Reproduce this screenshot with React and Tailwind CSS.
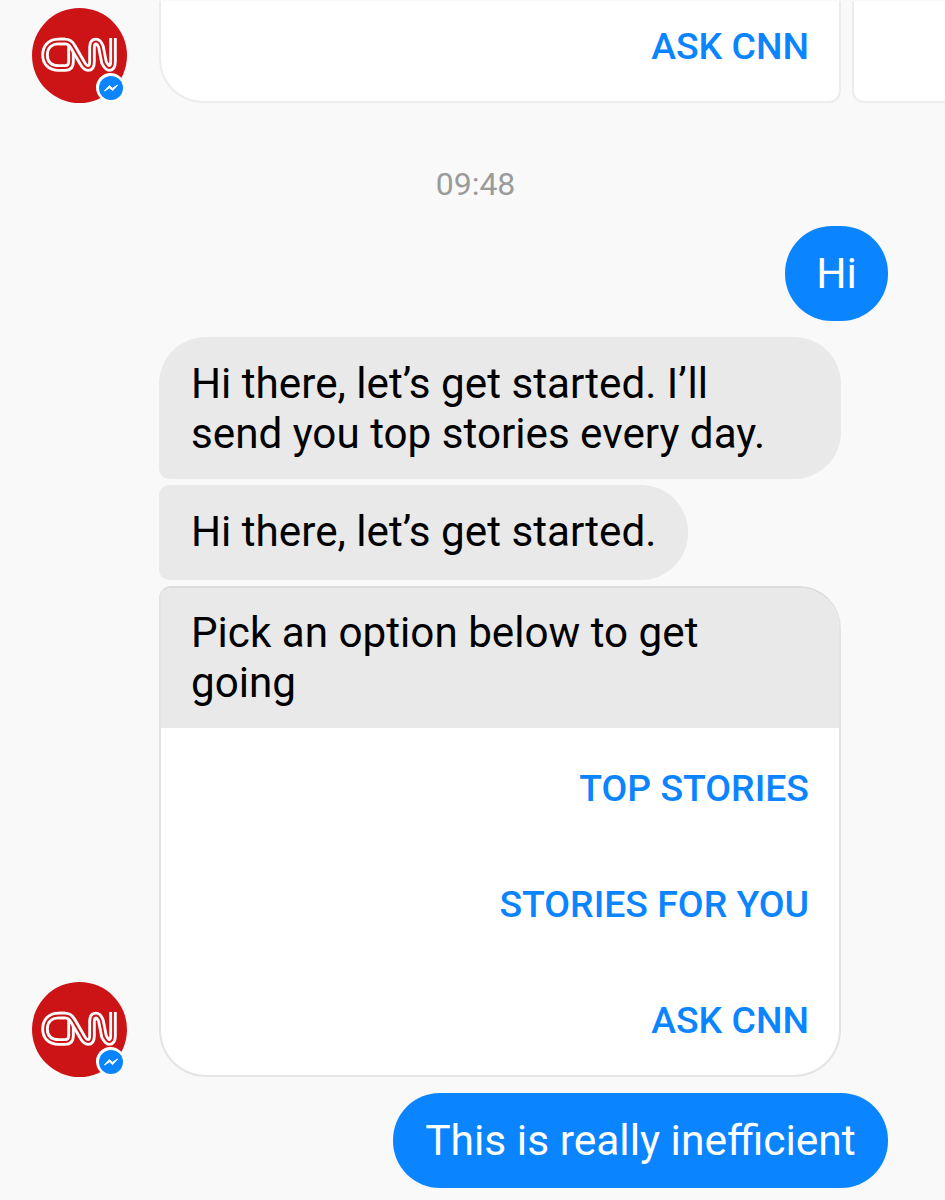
import React from 'react';

const LOGO_STEM = 'M39 37 V54 Q39 60 33 60 H27 C17 60 13 54 13 47 C13 40 17 33.5 27 33.5 H33';
const LOGO_WAVE = 'M27 33.5 H33 Q38 33.5 41 39 L50 54.5 Q53 60 56 60 Q60 60 60 54 V39.5 Q60 33.5 64 33.5 Q67 33.5 69 39 L72 54.5 Q75 60 77 60 Q81 60 81 54 V30';

const CnnAvatar = () => (
  <div className="relative w-[95px] h-[95px] shrink-0">
    <svg viewBox="0 0 95 95" className="w-full h-full">
      <circle cx="47.5" cy="47.5" r="47.5" fill="#cc1417" />
      <g fill="none" strokeLinejoin="round">
        <path d={LOGO_STEM} stroke="#fff" strokeWidth="7.5" />
        <path d={LOGO_STEM} stroke="#cc1417" strokeWidth="1.8" />
        <path d={LOGO_WAVE} stroke="#fff" strokeWidth="7.5" />
        <path d={LOGO_WAVE} stroke="#cc1417" strokeWidth="1.8" />
      </g>
    </svg>
    <div className="absolute left-[64px] top-[65px] w-[29px] h-[29px] rounded-full bg-white flex items-center justify-center">
      <svg viewBox="0 0 24 24" className="w-[24px] h-[24px]">
        <circle cx="12" cy="12" r="12" fill="#0a84ff" />
        <path d="M5.5 15 L10.3 9.6 L13.5 12.3 L18.5 9 L13.7 14.6 L10.5 11.9 Z" fill="#fff" stroke="#fff" strokeWidth="1" strokeLinejoin="round" />
      </svg>
    </div>
  </div>
);

const OptionButton = ({ children }) => (
  <div className="h-[116px] flex items-center justify-end pt-[5px] pr-[30px] text-[37.4px] font-medium text-[#0a84ff]">
    {children}
  </div>
);

const GrayBubble = ({ children, className }) => (
  <div className={`bg-[#e9e9e9] text-black text-[42.2px] leading-[50px] px-[32px] py-[22px] ${className}`}>
    {children}
  </div>
);

const BlueBubble = ({ children, className }) => (
  <div className="flex justify-end pr-[57px]">
    <div className={`h-[95px] flex items-center justify-center rounded-[47px] bg-[#0a84ff] text-white text-[42.5px] ${className}`}>
      {children}
    </div>
  </div>
);

export default function App() {
  return (
    <div
      className="w-[945px] h-[1200px] overflow-hidden bg-[#f9f9f9] flex flex-col"
      style={{ fontFamily: 'Roboto, "Noto Sans", sans-serif' }}
    >
      {/* previous message, cut off by the top of the screen */}
      <div className="flex items-end h-[103px] pl-[32px] gap-[32px]">
        <CnnAvatar />
        <div className="w-[682px] h-[102px] shrink-0 bg-white border-2 border-t-0 border-[#ececec] rounded-bl-[44px] rounded-br-[12px] flex items-center justify-end pb-[9px] pr-[30px] text-[37.4px] font-medium text-[#0a84ff]">
          ASK CNN
        </div>
        <div className="w-[300px] h-[102px] -ml-[21px] shrink-0 bg-white border-2 border-t-0 border-[#ececec] rounded-bl-[12px]" />
      </div>

      <div className="mt-[63px] h-[36px] flex items-center justify-center pl-[6px] text-[32px] text-[#9b9b9b]">09:48</div>

      <div className="mt-[24px]">
        <BlueBubble className="w-[103px]">Hi</BlueBubble>
      </div>

      <div className="mt-[16px] flex items-end pl-[32px] gap-[32px]">
        <CnnAvatar />
        <div className="w-[682px] flex flex-col gap-[6px] items-start">
          <GrayBubble className="w-full h-[142px] rounded-tl-[47px] rounded-tr-[47px] rounded-br-[47px] rounded-bl-[10px] py-[21px]">
            Hi there, let’s get started. I’ll<br />send you top stories every day.
          </GrayBubble>
          <GrayBubble className="h-[95px] rounded-tl-[10px] rounded-bl-[10px] rounded-tr-[47px] rounded-br-[47px]">
            Hi there, let’s get started.
          </GrayBubble>
          <div className="w-full h-[491px] bg-white border-2 border-[#e4e4e4] border-t-[#dcdcdc] rounded-tl-[12px] rounded-tr-[42px] rounded-br-[47px] rounded-bl-[47px] overflow-hidden">
            <div className="h-[140px] bg-[#e9e9e9] px-[30px] pt-[20px] text-[42.2px] leading-[50px] text-black">
              Pick an option below to get<br />going
            </div>
            <OptionButton>TOP STORIES</OptionButton>
            <OptionButton>STORIES FOR YOU</OptionButton>
            <OptionButton>ASK CNN</OptionButton>
          </div>
        </div>
      </div>

      <div className="mt-[16px]">
        <BlueBubble className="w-[495px]">This is really inefficient</BlueBubble>
      </div>
    </div>
  );
}
